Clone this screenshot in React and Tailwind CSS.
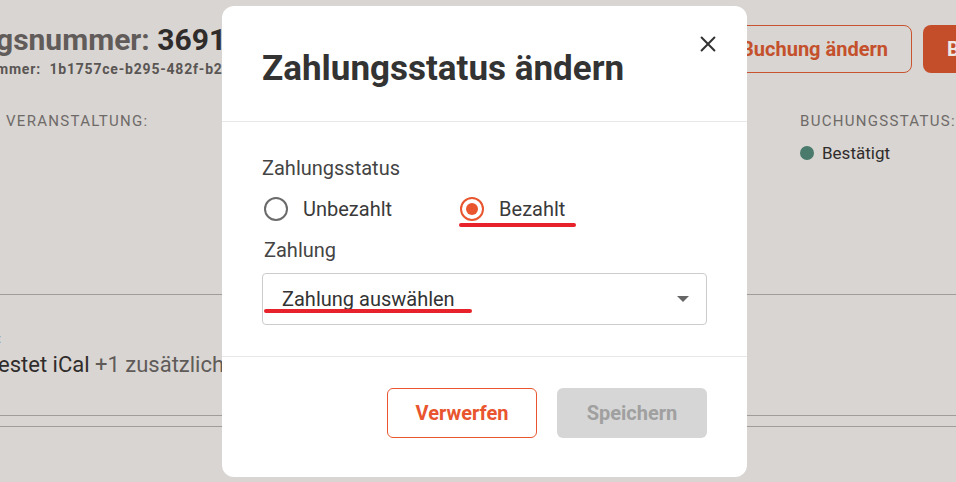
import React from "react";

function Radio({ checked, label }) {
  return (
    <label className="flex items-center gap-[15px]">
      <span
        className={
          checked
            ? "flex h-[24px] w-[24px] items-center justify-center rounded-full border-[2px] border-[#e8552e]"
            : "flex h-[24px] w-[24px] items-center justify-center rounded-full border-[2px] border-[#6b6b6b]"
        }
      >
        {checked && <span className="h-[12px] w-[12px] rounded-full bg-[#e8552e]" />}
      </span>
      <span className="text-[20px] leading-[30px] text-[#3a3a3a]">{label}</span>
    </label>
  );
}

function Page() {
  return (
    <div className="flex h-full flex-col">
      {/* header */}
      <div className="flex h-[110px] justify-between pt-[21px]">
        <div className="ml-[-4px]">
          <h1 className="whitespace-nowrap text-[30px] font-bold leading-[37px] text-[#615c5a]">
            gsnummer: <span className="text-[#2f2c2b]">36912</span>
          </h1>
          <p className="mt-[1px] whitespace-nowrap text-[14px] font-bold tracking-[0.8px] text-[#5a5654]">
            mmer:&nbsp;&nbsp;1b1757ce-b295-482f-b2a1
          </p>
        </div>
        <div className="mr-[-12px] flex items-start gap-[11px] pt-[4px]">
          <button className="h-[48px] rounded-[8px] border border-[#c8542f] px-[23px] text-[20px] font-bold text-[#c4502c]">
            Buchung ändern
          </button>
          <button className="h-[48px] w-[45px] rounded-l-[8px] bg-[#c54e2a] pl-[24px] text-left text-[20px] font-bold text-[#efe9e6]">
            B
          </button>
        </div>
      </div>

      <div className="flex h-[185px] justify-between border-b border-[#a09c9a]">
        <div className="pl-[6px] text-[15px] tracking-[1.3px] text-[#6e6a68]">VERANSTALTUNG:</div>
        <div className="w-[156px]">
          <div className="whitespace-nowrap text-[15px] tracking-[1.3px] text-[#6e6a68]">BUCHUNGSSTATUS:</div>
          <div className="mt-[8px] flex items-center gap-[8px] text-[17px] text-[#2f2c2b]">
            <span className="h-[14px] w-[14px] rounded-full bg-[#4a7a6c]" />
            Bestätigt
          </div>
        </div>
      </div>

      <div className="h-[121px] border-b border-[#a09c9a] pt-[36px]">
        <div className="ml-[-2px] text-[13px] leading-[16px] text-[#6e6a68]">:</div>
        <div className="ml-[-2px] mt-[1px] whitespace-nowrap text-[22px] text-[#2f2c2b]">
          estet iCal <span className="text-[#5f5b59]">+1 zusätzliche</span>
        </div>
      </div>
      <div className="h-[11px] border-b border-[#a09c9a]" />
    </div>
  );
}

export default function App() {
  return (
    <div
      className="relative h-[482px] w-[956px] overflow-hidden bg-[#d9d5d2]"
      style={{ fontFamily: "Roboto, 'Noto Sans', sans-serif" }}
    >
      <Page />

      <div className="absolute left-[222px] top-[6px] flex h-[471px] w-[525px] flex-col rounded-[12px] bg-white">
        <div className="relative h-[116px] border-b border-[#e8e8e8] px-[40px] pt-[42px]">
          <h2 className="text-[35px] font-bold leading-[42px] text-[#333333]">Zahlungsstatus ändern</h2>
          <button className="absolute right-[28px] top-[27px] text-[#333333]">
            <svg width="22" height="22" viewBox="0 0 24 24" fill="none" stroke="currentColor" strokeWidth="2.2" strokeLinecap="round">
              <path d="M5 5L19 19M19 5L5 19" />
            </svg>
          </button>
        </div>

        <div className="border-b border-[#e8e8e8] px-[40px] pb-[31px] pt-[34px]">
          <div className="text-[20px] leading-[24px] text-[#444444]">Zahlungsstatus</div>
          <div className="relative mt-[14px] flex gap-[68px] pl-[2px]">
            <Radio label="Unbezahlt" />
            <Radio checked label="Bezahlt" />
            <span className="absolute left-[197px] top-[29px] h-[4px] w-[117px] rounded-full bg-[#e8222a]" />
          </div>
          <div className="mt-[14px] pl-[2px] text-[20px] leading-[24px] text-[#444444]">Zahlung</div>
          <div className="relative mt-[11px] flex h-[52px] items-center justify-between rounded-[4px] border border-[#cccccc] pl-[19px] pr-[16px]">
            <span className="text-[20px] text-[#333333]">Zahlung auswählen</span>
            <svg width="14" height="8" viewBox="0 0 14 8">
              <path d="M1 1H13L7 7Z" fill="#666666" />
            </svg>
            <span className="absolute left-[1px] top-[35px] h-[4px] w-[208px] rounded-full bg-[#e8222a]" />
          </div>
        </div>

        <div className="flex justify-end gap-[20px] px-[40px] pt-[31px]">
          <button className="h-[50px] w-[150px] rounded-[6px] border border-[#e8552e] text-[20px] font-bold text-[#e8552e]">
            Verwerfen
          </button>
          <button className="h-[50px] w-[150px] rounded-[6px] bg-[#d6d6d6] text-[20px] font-bold text-[#a0a0a0]">
            Speichern
          </button>
        </div>
      </div>
    </div>
  );
}
